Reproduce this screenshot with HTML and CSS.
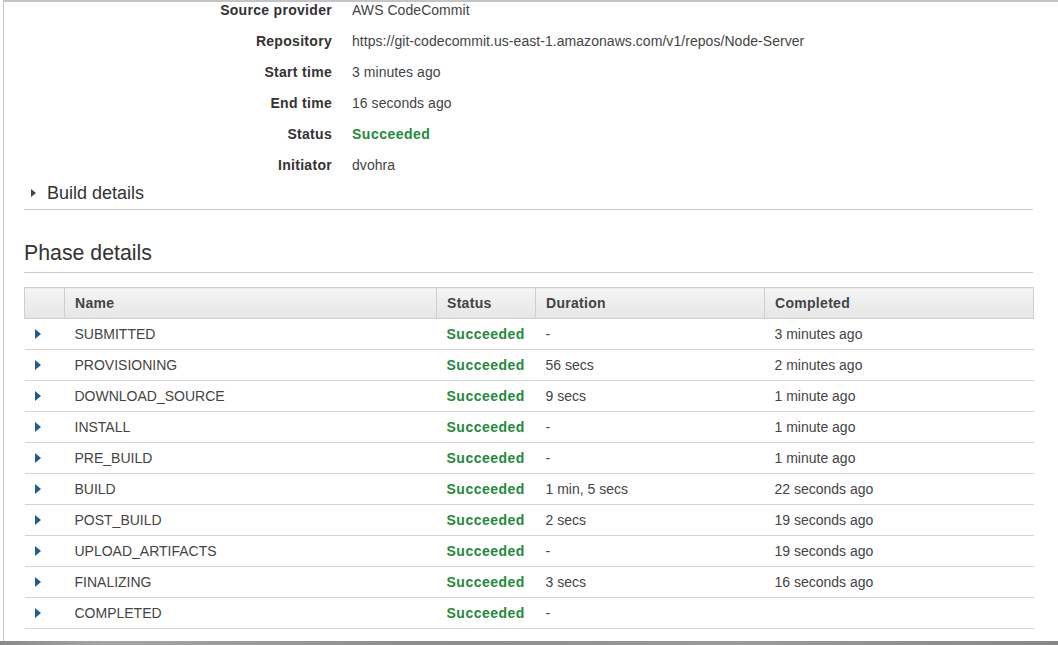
FILE: index.html
```html
<!DOCTYPE html>
<html>
<head>
<meta charset="utf-8">
<link rel="stylesheet" href="styles.css">
</head>
<body>
<div class="page">
  <div class="content">
    <dl class="summary">
      <dt>Source provider</dt><dd>AWS CodeCommit</dd>
      <dt>Repository</dt><dd>https://git-codecommit.us-east-1.amazonaws.com/v1/repos/Node-Server</dd>
      <dt>Start time</dt><dd>3 minutes ago</dd>
      <dt>End time</dt><dd>16 seconds ago</dd>
      <dt>Status</dt><dd class="ok">Succeeded</dd>
      <dt>Initiator</dt><dd>dvohra</dd>
    </dl>
    <div class="collapse"><span class="caret"></span>Build details</div>
    <h2 class="section">Phase details</h2>
    <table class="phases">
      <colgroup>
        <col class="c-arrow"><col class="c-name"><col class="c-status"><col class="c-dur"><col class="c-done">
      </colgroup>
      <thead>
        <tr><th></th><th>Name</th><th>Status</th><th>Duration</th><th>Completed</th></tr>
      </thead>
      <tbody>
        <tr><td><span class="arrow"></span></td><td>SUBMITTED</td><td class="ok">Succeeded</td><td>-</td><td>3 minutes ago</td></tr>
        <tr><td><span class="arrow"></span></td><td>PROVISIONING</td><td class="ok">Succeeded</td><td>56 secs</td><td>2 minutes ago</td></tr>
        <tr><td><span class="arrow"></span></td><td>DOWNLOAD_SOURCE</td><td class="ok">Succeeded</td><td>9 secs</td><td>1 minute ago</td></tr>
        <tr><td><span class="arrow"></span></td><td>INSTALL</td><td class="ok">Succeeded</td><td>-</td><td>1 minute ago</td></tr>
        <tr><td><span class="arrow"></span></td><td>PRE_BUILD</td><td class="ok">Succeeded</td><td>-</td><td>1 minute ago</td></tr>
        <tr><td><span class="arrow"></span></td><td>BUILD</td><td class="ok">Succeeded</td><td>1 min, 5 secs</td><td>22 seconds ago</td></tr>
        <tr><td><span class="arrow"></span></td><td>POST_BUILD</td><td class="ok">Succeeded</td><td>2 secs</td><td>19 seconds ago</td></tr>
        <tr><td><span class="arrow"></span></td><td>UPLOAD_ARTIFACTS</td><td class="ok">Succeeded</td><td>-</td><td>19 seconds ago</td></tr>
        <tr><td><span class="arrow"></span></td><td>FINALIZING</td><td class="ok">Succeeded</td><td>3 secs</td><td>16 seconds ago</td></tr>
        <tr><td><span class="arrow"></span></td><td>COMPLETED</td><td class="ok">Succeeded</td><td>-</td><td></td></tr>
      </tbody>
    </table>
  </div>
</div>
<div class="bottombar"></div>
</body>
</html>
```

FILE: styles.css
```css
html, body {
  margin: 0;
  padding: 0;
  background: #fff;
  height: 645px;
  overflow: hidden;
}
body {
  font-family: "Liberation Sans", Arial, sans-serif;
  font-size: 14px;
  color: #444;
}
.page {
  height: 639px;
  margin-left: 3px;
  border-top: 2px solid #c4c4c4;
  border-left: 1px solid #c4c4c4;
  overflow: hidden;
}
.content {
  width: 1009px;
  padding-left: 20px;
}
.summary {
  margin: 0;
  display: grid;
  grid-template-columns: 308px 1fr;
  column-gap: 20px;
  row-gap: 15px;
  line-height: 16px;
}
.summary dt {
  text-align: right;
  font-weight: bold;
  color: #333;
  letter-spacing: 0.3px;
}
.summary dd {
  margin: 0;
  color: #444;
  letter-spacing: 0.05px;
}
.summary dd.ok,
.ok {
  color: #1f8a3a;
  font-weight: bold;
  letter-spacing: 0.5px;
}
.collapse {
  margin-top: 8px;
  line-height: 24px;
  font-size: 18px;
  color: #333;
  padding-bottom: 4px;
  border-bottom: 1px solid #ccc;
  display: flex;
  align-items: center;
}
.caret {
  width: 0;
  height: 0;
  border-top: 4px solid transparent;
  border-bottom: 4px solid transparent;
  border-left: 5px solid #444;
  margin-left: 7px;
  margin-right: 11px;
}
.section {
  margin: 29px 0 0;
  font-size: 21.3px;
  font-weight: normal;
  line-height: 28px;
  color: #333;
  padding-bottom: 5px;
  border-bottom: 1px solid #ccc;
}
.phases {
  margin-top: 14px;
  width: 1009px;
  border-collapse: collapse;
  table-layout: fixed;
}
.c-arrow { width: 40px; }
.c-name { width: 372px; }
.c-status { width: 99px; }
.c-dur { width: 229px; }
.c-done { width: 269px; }
.phases th {
  height: 30px;
  padding: 0 10px;
  text-align: left;
  font-weight: bold;
  color: #444;
  background: linear-gradient(#f5f5f5, #e6e6e6);
  border: 1px solid #cfcfcf;
  letter-spacing: 0.3px;
}
.phases td {
  height: 30px;
  padding: 0 10px;
  border-bottom: 1px solid #d2d2d2;
  white-space: nowrap;
}
.phases td:first-child {
  padding: 0 0 0 10px;
}
.arrow {
  display: block;
  width: 0;
  height: 0;
  border-top: 5px solid transparent;
  border-bottom: 5px solid transparent;
  border-left: 6px solid #1f5c8e;
}
.bottombar {
  height: 4px;
  background: linear-gradient(90deg, #8a8a8a, #a5a5a5 10%, #8d8d8d 40%, #9a9a9a 70%, #888);
}
```
